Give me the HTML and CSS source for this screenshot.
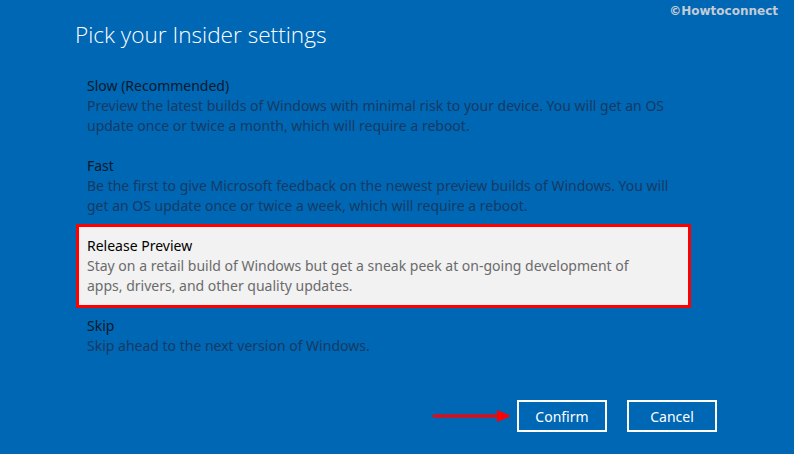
FILE: index.html
```html
<!DOCTYPE html>
<html lang="en">
<head>
  <meta charset="UTF-8">
  <title>Pick your Insider settings</title>
  <link rel="stylesheet" href="styles.css">
</head>
<body>
  <div id="watermark">&copy;Howtoconnect</div>

  <div class="page">
    <h1>Pick your Insider settings</h1>

    <div class="options">
      <div class="option">
        <div class="option-title">Slow (Recommended)</div>
        <div class="option-desc">Preview the latest builds of Windows with minimal risk to your device. You will get an OS<br>update once or twice a month, which will require a reboot.</div>
      </div>
      <div class="option">
        <div class="option-title">Fast</div>
        <div class="option-desc">Be the first to give Microsoft feedback on the newest preview builds of Windows. You will<br>get an OS update once or twice a week, which will require a reboot.</div>
      </div>
      <div class="option selected">
        <div class="option-title">Release Preview</div>
        <div class="option-desc">Stay on a retail build of Windows but get a sneak peek at on-going development of<br>apps, drivers, and other quality updates.</div>
      </div>
      <div class="option">
        <div class="option-title">Skip</div>
        <div class="option-desc">Skip ahead to the next version of Windows.</div>
      </div>
    </div>

    <div class="actions">
      <svg class="arrow" width="80" height="14" viewBox="0 0 80 14">
        <line x1="0" y1="7" x2="68" y2="7" stroke="#ff0000" stroke-width="3"/>
        <polygon points="64,1 78,7 64,13" fill="#ff0000"/>
      </svg>
      <button>Confirm</button>
      <button>Cancel</button>
    </div>
  </div>
</body>
</html>
```

FILE: styles.css
```css
body {
  margin: 0;
  background: #0067b4;
  font-family: "Noto Sans", "Open Sans", sans-serif;
  overflow: hidden;
}

.page {
  padding: 20px 77px 0 75px;
  height: 454px;
  box-sizing: border-box;
}

h1 {
  margin: 0;
  font-family: "Open Sans", sans-serif;
  font-weight: 300;
  font-size: 22.6px;
  line-height: 30px;
  color: #ffffff;
}

.options {
  margin-top: 26px;
  padding-left: 12px;
}

.option {
  margin-bottom: 20px;
  font-size: 14px;
  line-height: 20px;
}

.option-title {
  color: #0b1a2b;
}

.option-desc {
  color: #153a63;
}

.option.selected {
  width: 615px;
  box-sizing: border-box;
  margin: -12px 0 8px -11px;
  padding: 9px 8px;
  background: #f2f2f2;
  border: 3px solid #ff0000;
}

.option.selected .option-title {
  color: #000000;
}

.option.selected .option-desc {
  color: #6b6b6b;
}

.actions {
  display: flex;
  justify-content: flex-end;
  align-items: center;
  gap: 20px;
  margin-top: 44px;
}

.arrow {
  margin-right: -16px;
}

button {
  width: 90px;
  height: 32px;
  background: transparent;
  border: 2px solid #ffffff;
  color: #ffffff;
  font-family: "Noto Sans", sans-serif;
  font-size: 14px;
  padding: 0;
}

#watermark {
  position: absolute;
  top: 4px;
  right: 16px;
  font-family: "DejaVu Sans", sans-serif;
  font-weight: bold;
  font-size: 12px;
  color: #c3ccd6;
}
```
